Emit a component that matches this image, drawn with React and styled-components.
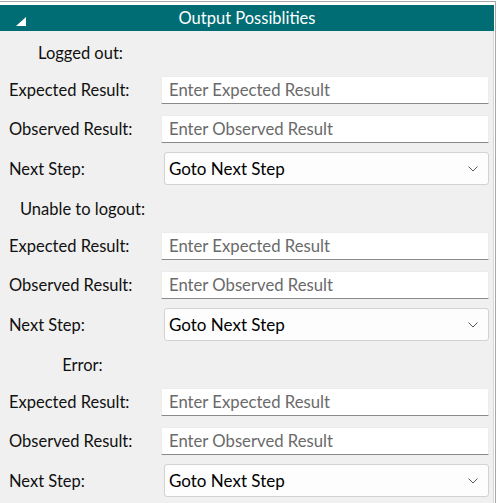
import React from 'react'
import styled, { createGlobalStyle } from 'styled-components'

const GlobalStyle = createGlobalStyle`
  html, body {
    margin: 0;
    padding: 0;
    background: #ffffff;
  }
  body {
    font-family: Lato, "Open Sans", sans-serif;
  }
`

const Frame = styled.div`
  width: 494px;
  margin-top: 1px;
  border-top: 1px solid #a8a8a8;
  border-right: 1px solid #a8a8a8;
  padding: 3px 1px 0 0;
  background: #ffffff;
`

const Header = styled.div`
  position: relative;
  height: 26px;
  background: #006d75;
  color: #ffffff;
  display: flex;
  align-items: center;
  justify-content: center;
  font-size: 16.5px;
`

const Toggle = styled.span`
  position: absolute;
  left: 16px;
  top: 12px;
  width: 0;
  height: 0;
  border-left: 10px solid transparent;
  border-bottom: 9px solid #ffffff;
`

const Body = styled.div`
  background: #f0f0f0;
  min-height: 472px;
  border-right: 1px solid #d8d8d8;
`

const Section = styled.section`
  display: flex;
  flex-direction: column;
  padding-top: 14px;
  &:first-child {
    padding-top: 12px;
  }
`

const Heading = styled.div`
  width: 161px;
  height: 20px;
  line-height: 20px;
  text-align: center;
  font-size: 16.5px;
  color: #111;
  margin-bottom: 13px;
  padding-left: ${p => p.$shift || 0}px;
  box-sizing: border-box;
`

const Row = styled.div`
  display: grid;
  grid-template-columns: 161px 328px;
  align-items: center;
  margin-bottom: ${p => p.$gap || 0}px;
`

const Label = styled.label`
  padding-left: 9px;
  font-size: 16.5px;
  color: #111;
  white-space: nowrap;
`

const TextInput = styled.input`
  box-sizing: border-box;
  height: 28px;
  width: 100%;
  border: 1px solid #ececec;
  border-bottom: 1px solid #8a8a8a;
  border-radius: 2px 2px 0 0;
  background: #ffffff;
  padding: 0 7px;
  font-family: inherit;
  font-size: 16.7px;
  color: #111;
  outline: none;
  &::placeholder {
    color: #6a6a6a;
  }
`

const SelectWrap = styled.div`
  position: relative;
  margin-left: 3px;
  height: 33px;
`

const Select = styled.select`
  box-sizing: border-box;
  appearance: none;
  width: 100%;
  height: 100%;
  border: 1px solid #d2d2d2;
  border-radius: 3px;
  background: #fdfdfd;
  padding: 0 30px 0 4px;
  font-family: inherit;
  font-size: 17px;
  color: #000;
  outline: none;
`

const Chevron = styled.svg`
  position: absolute;
  right: 11px;
  top: 14px;
  width: 10px;
  height: 6px;
  pointer-events: none;
`

const groups = [
  { title: 'Logged out:', shift: -8 },
  { title: 'Unable to logout:', shift: 4 },
  { title: 'Error:', shift: 4 },
]

const Group = ({ title, shift }) => (
  <Section>
    <Heading $shift={shift}>{title}</Heading>
    <Row $gap={11}>
      <Label>Expected Result:</Label>
      <TextInput placeholder="Enter Expected Result" />
    </Row>
    <Row $gap={9}>
      <Label>Observed Result:</Label>
      <TextInput placeholder="Enter Observed Result" />
    </Row>
    <Row>
      <Label>Next Step:</Label>
      <SelectWrap>
        <Select defaultValue="next">
          <option value="next">Goto Next Step</option>
        </Select>
        <Chevron viewBox="0 0 10 6">
          <path d="M0.5 0.5 L5 5 L9.5 0.5" fill="none" stroke="#555" strokeWidth="1" />
        </Chevron>
      </SelectWrap>
    </Row>
  </Section>
)

export default function App() {
  return (
    <>
      <GlobalStyle />
      <Frame>
        <Header>
          <Toggle />
          Output Possiblities
        </Header>
        <Body>
          {groups.map(g => (
            <Group key={g.title} {...g} />
          ))}
        </Body>
      </Frame>
    </>
  )
}
